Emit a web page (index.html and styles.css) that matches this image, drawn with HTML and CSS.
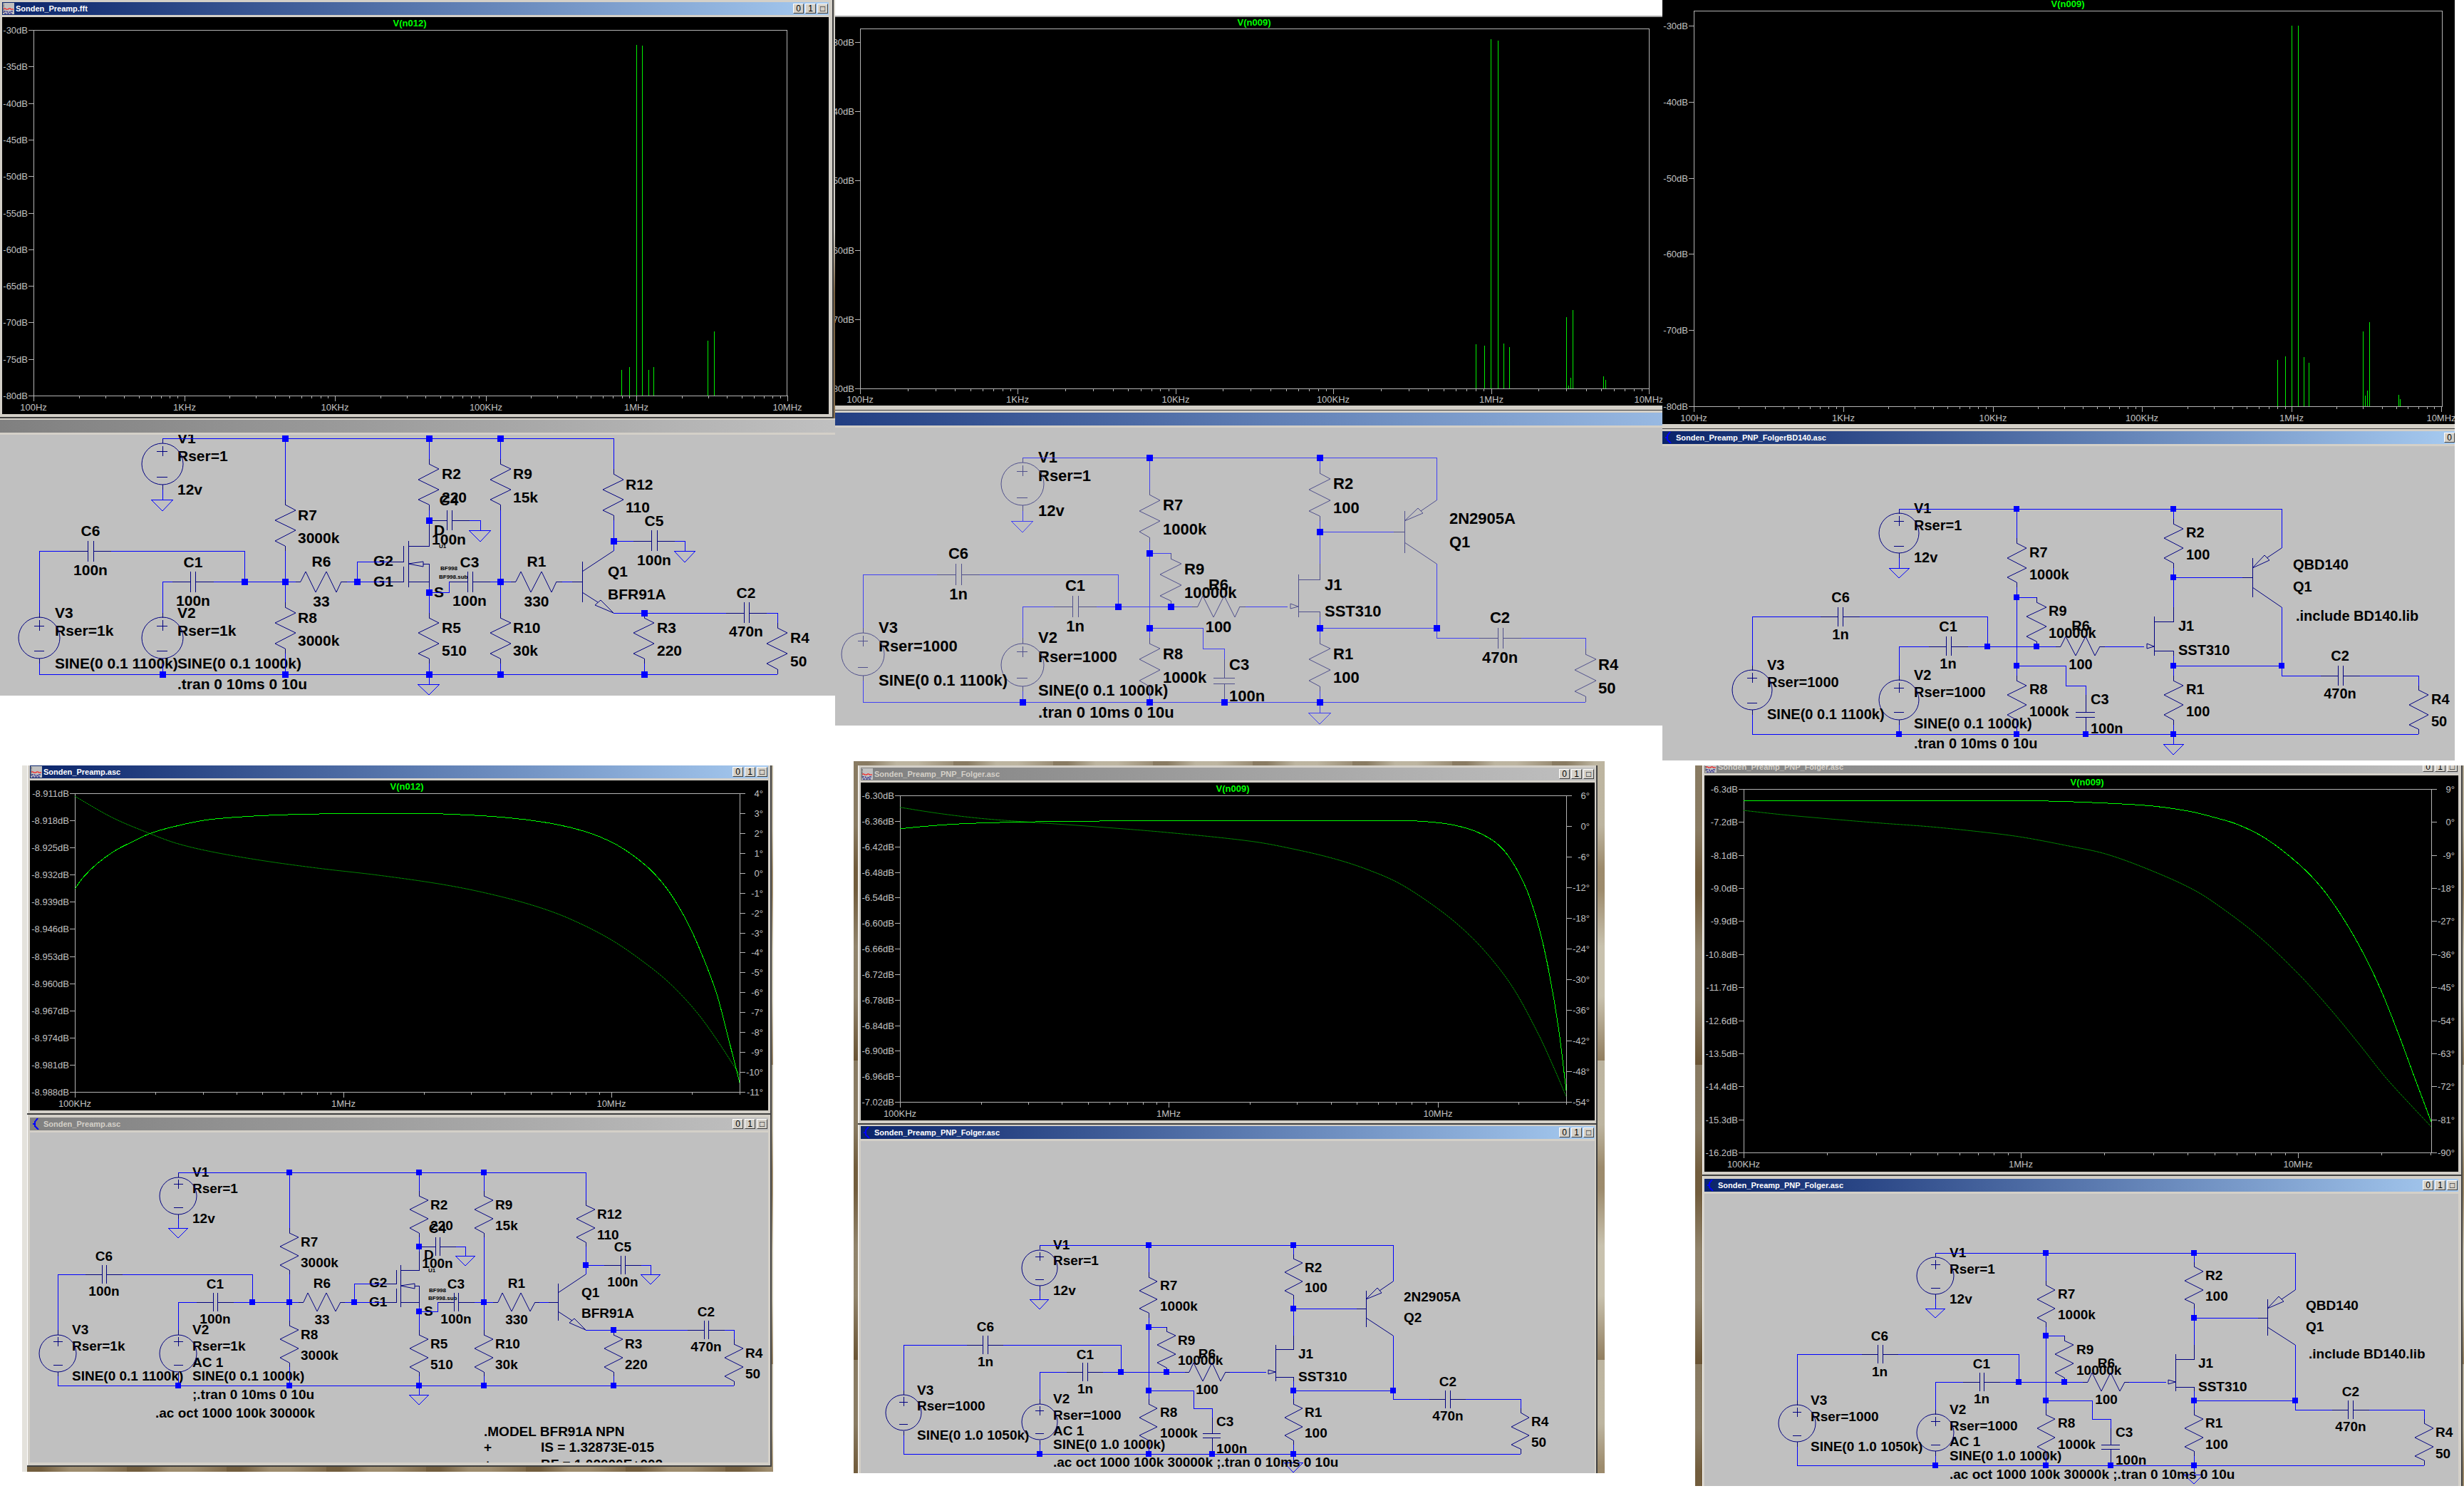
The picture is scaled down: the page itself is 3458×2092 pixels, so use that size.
FILE: index.html
```html
<!DOCTYPE html>
<html lang="de">
<head>
<meta charset="utf-8">
<title>Sonden_Preamp</title>
<link rel="stylesheet" href="styles.css">
</head>
<body>
<svg class="defs" aria-hidden="true">
  <symbol id="icon-plot" viewBox="0 0 16 16">
    <rect width="16" height="16" fill="#c0c0c0"/>
    <path d="M1 1v14" stroke="#000" stroke-dasharray="1 1"/>
    <path d="M1 8h3v1h4v-1h3v1h4" stroke="#f00" fill="none"/>
    <path d="M1 12h5v1h5v-1h4M2 15h12" stroke="#000080" fill="none" stroke-dasharray="3 1"/>
  </symbol>
  <symbol id="icon-schematic" viewBox="0 0 16 16">
    <path d="M3 8h3M6 4v8M6 5l4-5M6 11l5 5M8 14h2" stroke="#00f" stroke-width="2" fill="none"/>
  </symbol>
</svg>
<main class="board">

  <section class="column">
    <div class="strip">
      <article class="window window-framed">
        <header class="bar active">
          <svg class="icon"><use href="#icon-plot"/></svg>
          <h2>Sonden_Preamp.fft</h2>
          <button type="button" aria-label="Minimize">0</button><button type="button" aria-label="Maximize">1</button><button type="button" aria-label="Close">□</button>
        </header>
        <svg class="plot" id="fft-bfr" viewBox="3 24 1160 557"></svg>
      </article>
    </div>
    <article class="window window-flush">
      <div class="bar inactive"></div>
      <svg class="sheet text-21" id="sch-bfr-tran" viewBox="0 610 1172 366"></svg>
    </article>
    <div class="desk desk-left">
      <article class="window window-docked">
        <header class="bar active">
          <svg class="icon"><use href="#icon-plot"/></svg>
          <h2>Sonden_Preamp.asc</h2>
          <button type="button" aria-label="Minimize">0</button><button type="button" aria-label="Maximize">1</button><button type="button" aria-label="Close">□</button>
        </header>
        <svg class="plot" id="ac-bfr" viewBox="42 1095 1036 463"></svg>
      </article>
      <article class="window window-docked lower">
        <header class="bar inactive">
          <svg class="icon"><use href="#icon-schematic"/></svg>
          <h2>Sonden_Preamp.asc</h2>
          <button type="button" aria-label="Minimize">0</button><button type="button" aria-label="Maximize">1</button><button type="button" aria-label="Close">□</button>
        </header>
        <svg class="sheet text-19" id="sch-bfr-ac" viewBox="42 1589 1036 463"></svg>
      </article>
    </div>
  </section>

  <section class="column">
    <article class="window window-bare spaced">
      <svg class="plot" id="fft-2n" viewBox="1172 24 1161 545"></svg>
    </article>
    <article class="window window-flush roomy">
      <div class="bar soft"></div>
      <svg class="sheet text-22 pale" id="sch-2n-tran" viewBox="1172 600 1161 418"></svg>
    </article>
    <div class="desk desk-middle">
      <article class="window window-docked raised">
        <header class="bar inactive">
          <svg class="icon"><use href="#icon-plot"/></svg>
          <h2>Sonden_Preamp_PNP_Folger.asc</h2>
          <button type="button" aria-label="Minimize">0</button><button type="button" aria-label="Maximize">1</button><button type="button" aria-label="Close">□</button>
        </header>
        <svg class="plot" id="ac-2n" viewBox="1208 1098 1030 474"></svg>
      </article>
      <article class="window window-docked cut close">
        <header class="bar active">
          <svg class="icon"><use href="#icon-schematic"/></svg>
          <h2>Sonden_Preamp_PNP_Folger.asc</h2>
          <button type="button" aria-label="Minimize">0</button><button type="button" aria-label="Maximize">1</button><button type="button" aria-label="Close">□</button>
        </header>
        <svg class="sheet text-19" id="sch-2n-ac" viewBox="1208 1601 1030 466"></svg>
      </article>
    </div>
  </section>

  <section class="column">
    <div class="inset">
      <article class="window window-bare">
        <svg class="plot" id="fft-bd" viewBox="2333 0 1112 595"></svg>
      </article>
      <article class="window window-flush roomy">
        <header class="bar active partial">
          <svg class="icon"><use href="#icon-schematic"/></svg>
          <h2>Sonden_Preamp_PNP_FolgerBD140.asc</h2>
          <button type="button" aria-label="Minimize">0</button>
        </header>
        <svg class="sheet text-20" id="sch-bd-tran" viewBox="2333 626 1112 441"></svg>
      </article>
    </div>
    <div class="desk desk-right">
      <article class="window window-docked tucked">
        <header class="bar inactive">
          <svg class="icon"><use href="#icon-plot"/></svg>
          <h2>Sonden_Preamp_PNP_Folger.asc</h2>
          <button type="button" aria-label="Minimize">0</button><button type="button" aria-label="Maximize">1</button><button type="button" aria-label="Close">□</button>
        </header>
        <svg class="plot" id="ac-bd" viewBox="2392 1088 1058 556"></svg>
      </article>
      <article class="window window-docked lower cut">
        <header class="bar active">
          <svg class="icon"><use href="#icon-schematic"/></svg>
          <h2>Sonden_Preamp_PNP_Folger.asc</h2>
          <button type="button" aria-label="Minimize">0</button><button type="button" aria-label="Maximize">1</button><button type="button" aria-label="Close">□</button>
        </header>
        <svg class="sheet text-19" id="sch-bd-ac" viewBox="2392 1675 1058 410"></svg>
      </article>
    </div>
  </section>

</main>
<script src="draw.js"></script>
</body>
</html>
```
FILE: styles.css
```css
* { box-sizing: border-box; }

body {
  margin: 0;
  background: #fff;
  font-family: "Liberation Sans", Arial, sans-serif;
}

.defs { display: none; }

.board {
  display: grid;
  grid-template-columns: 1172fr 1161fr 1125fr;
  align-items: start;
}

.column { display: flex; flex-direction: column; min-width: 0; }

.strip { padding-right: 2px; background: linear-gradient(#d4d0c8 55%, #7a6242 70%, #8a7250); }
.inset { padding-right: 13px; }

/* Wallpaper showing round the docked windows */
.desk {
  background:
    repeating-linear-gradient(90deg, rgba(90, 70, 40, .5) 0 20px, rgba(200, 192, 170, .3) 60px 90px, rgba(110, 90, 60, .4) 140px),
    repeating-linear-gradient(#b8b09c 0 90px, #8a7452 150px 180px, #c8c2b0 260px 330px, #7a6240 420px);
}
.desk-left { margin: 98px 87px 0 31px; padding: 0 2px 7px 0; border-left: 7px solid #e4e2dc; }
.desk-middle { margin: 50px 81px 0 26px; padding: 6px 10px 0 6px; }
.desk-right { margin: 7px 0 0 46px; padding: 0 2px 0 10px; }

.window { background: #d4d0c8; }
.window-framed { padding: 3px 5px 4px 3px; border-right: 2px solid #404040; border-bottom: 2px solid #404040; }
.window-flush { padding-top: 2px; }
.window-flush.roomy { padding-top: 3px; }
.window-bare { padding-bottom: 6px; border-bottom: 1px solid #404040; }
.window-bare.spaced { margin-top: 22px; border-top: 2px solid #a0a0a0; }
.window-docked { padding: 0 2px 4px 3px; border: solid #404040; border-width: 0 2px 2px 0; box-shadow: inset 1px 0 #fff; }
.desk-left .window-docked { padding-left: 4px; padding-right: 3px; }
.desk-middle .window-docked { padding-left: 4px; }
.desk-right .window-docked { padding-right: 4px; }
.window-docked.lower { padding-top: 4px; }
.window-docked.raised { padding-top: 3px; }
.window-docked.close { padding-top: 2px; }
.window-docked.cut { padding-bottom: 0; border-bottom: 0; }
.window-docked.tucked { overflow: hidden; }
.tucked .bar { margin-top: -7px; }

.bar {
  display: flex;
  align-items: center;
  gap: 2px;
  height: 18px;
  margin-bottom: 3px;
  padding: 0 1px;
  color: #fff;
}
.bar.active { background: linear-gradient(90deg, #0a246a, #a6caf0); }
.bar.inactive { background: linear-gradient(90deg, #808080, #c0c0c0); color: #d4d0c8; }
.bar.soft { background: linear-gradient(90deg, #223e82, #98b9e2); }
.bar.partial { padding-right: 0; }
.bar h2 {
  flex: 1;
  margin: 0;
  font-size: 11px;
  line-height: 18px;
  white-space: nowrap;
}
.icon { width: 16px; height: 16px; }

button {
  width: 15px;
  height: 14px;
  padding: 0;
  border: 1px solid;
  border-color: #fff #404040 #404040 #fff;
  background: #d4d0c8;
  color: #000;
  font: 12px/12px "Liberation Sans", Arial, sans-serif;
}

.plot, .sheet { display: block; width: 100%; height: auto; overflow: hidden; }
.plot { background: #000; }
.sheet { background: #c0c0c0; }

.plot text { font-size: 13px; fill: #c0c0c0; }
.plot .trace-name { font-weight: bold; fill: #00ff00; }
.axis { stroke: #b4b4b4; fill: none; shape-rendering: crispEdges; }
.spike { stroke: #00f000; fill: none; shape-rendering: crispEdges; }
.gain { stroke: #00ff00; fill: none; shape-rendering: crispEdges; }
.phase { stroke: #00ff00; fill: none; stroke-dasharray: 1 1; }

.sheet text { font-weight: bold; fill: #000; white-space: pre; }
.text-19 text { font-size: 19px; }
.text-20 text { font-size: 20px; }
.text-21 text { font-size: 21px; }
.text-22 text { font-size: 22px; }
.sheet .tiny { font-size: 8px; }
.wire, .part { fill: none; stroke: #0000ff; shape-rendering: crispEdges; }
.part { stroke: #000080; }
.round, .slant { fill: none; stroke: #000080; }
.earth { fill: none; stroke: #0000ff; }
.dot { fill: #0000ff; }
.pale .wire, .pale .earth { stroke: #4040f4; }
.pale .part, .pale .round, .pale .slant { stroke: #50508c; }
```
FILE: draw.js
```js
const NS = "http://www.w3.org/2000/svg";

function add(svg, name, attrs, text) {
  const node = document.createElementNS(NS, name);
  for (const key in attrs) node.setAttribute(key, attrs[key]);
  if (text !== undefined) node.textContent = text;
  svg.appendChild(node);
}

/* ---------- plots ---------- */

/* Smooth path through a list of points */
function curve(points) {
  let d = "M" + points[0];
  for (let i = 0; i < points.length - 1; i++) {
    const a = points[Math.max(i - 1, 0)], b = points[i], c = points[i + 1];
    const e = points[Math.min(i + 2, points.length - 1)];
    const t = (c[0] - b[0]) / 3;
    const s1 = (c[1] - a[1]) / (c[0] - a[0]), s2 = (e[1] - b[1]) / (e[0] - b[0]);
    d += `C${b[0] + t},${b[1] + t * s1} ${c[0] - t},${c[1] - t * s2} ${c}`;
  }
  return d;
}

function plot(id, o) {
  const svg = document.getElementById(id);
  const [left, top, right, bottom] = o.frame;
  let d = `M${left} ${top}H${right}V${bottom}H${left}Z`;

  o.levels.forEach((label, i) => {
    const step = (bottom - o.first) / (o.levels.length - 1);
    const y = Math.round(o.first + i * step);
    d += `M${left - 7} ${y}h7`;
    add(svg, "text", { x: left - 8, y: y + 5, "text-anchor": "end" }, label);
  });
  (o.degrees || []).forEach((value, i) => {
    const y = Math.round(top + i * (bottom - top) / (o.degrees.length - 1));
    d += `M${right} ${y}h8`;
    add(svg, "text", { x: right + 33, y: y + 5, "text-anchor": "end" }, value + "°");
  });
  o.decades.forEach((label, i) => {
    const x = left + i * o.decade;
    d += `M${Math.round(x)} ${bottom}v8`;
    add(svg, "text", { x: Math.round(x), y: bottom + o.drop, "text-anchor": "middle" }, label);
    for (let n = 2; n < 10; n++) {
      const minor = Math.round(x + o.decade * Math.log10(n));
      if (minor <= right) d += `M${minor} ${bottom}v4`;
    }
  });
  add(svg, "path", { class: "axis", d });
  add(svg, "text", { class: "trace-name", x: o.title[0], y: o.title[1] + 5, "text-anchor": "middle" }, o.name);

  if (o.spikes) {
    add(svg, "path", { class: "spike", d: o.spikes.map(([x, y]) => `M${x} ${y}V${bottom}`).join("") });
  }
  const place = ([x, y]) => [left + x * (right - left) / 1000, top + y * (bottom - top) / 1000];
  if (o.gain) add(svg, "path", { class: "gain", d: curve(o.gain.map(place)) });
  if (o.phase) add(svg, "path", { class: "phase", d: curve(o.phase.map(place)) });
}

const range = (from, to, step, digits, unit) => {
  const out = [];
  const count = Math.round((to - from) / step);
  for (let i = 0; i <= count; i++) out.push((from + i * step).toFixed(digits) + unit);
  return out;
};
const fftDecades = ["100Hz", "1KHz", "10KHz", "100KHz", "1MHz", "10MHz"];
const acDecades = ["100KHz", "1MHz", "10MHz"];

plot("fft-bfr", {
  frame: [47, 42, 1104, 555], first: 42, levels: range(-30, -80, -5, 0, "dB"),
  decades: fftDecades, decade: 211.5, drop: 21, name: "V(n012)", title: [575, 32],
  spikes: [[872, 519], [883, 515], [893, 63], [901, 64], [910, 519], [917, 515], [993, 478], [1002, 465]]
});
plot("fft-2n", {
  frame: [1207, 40, 2314, 545], first: 59, levels: range(-30, -80, -10, 0, "dB"),
  decades: fftDecades, decade: 221.4, drop: 20, name: "V(n009)", title: [1760, 31],
  spikes: [[2071, 483], [2083, 485], [2092, 55], [2102, 57], [2110, 482], [2118, 487], [2198, 445],
    [2201, 541], [2204, 530], [2207, 435], [2250, 528], [2253, 533]]
});
plot("fft-bd", {
  frame: [2377, 15, 3427, 570], first: 36, levels: range(-30, -80, -10, 0, "dB"),
  decades: fftDecades, decade: 209.8, drop: 21, name: "V(n009)", title: [2902, 5],
  spikes: [[3196, 505], [3207, 500], [3216, 36], [3225, 36], [3233, 501], [3240, 509], [3316, 465],
    [3319, 555], [3322, 548], [3325, 452], [3366, 554], [3368, 560]]
});
plot("ac-bfr", {
  frame: [105, 1113, 1038, 1532], first: 1113, levels: range(-8.911, -8.988, -0.007, 3, "dB"),
  degrees: range(4, -11, -1, 0, ""), decades: acDecades, decade: 376.5, drop: 21,
  name: "V(n012)", title: [571, 1103],
  gain: [[0, 320], [14, 278], [34, 235], [60, 193], [86, 163], [113, 135], [145, 114], [193, 91], [243, 80],
    [315, 72], [404, 68], [470, 67], [551, 69], [647, 81], [719, 102], [769, 129], [807, 163], [839, 207],
    [869, 263], [894, 330], [920, 426], [942, 533], [965, 668], [983, 819], [1000, 969]],
  phase: [[0, 10], [56, 81], [113, 135], [152, 167], [204, 195], [281, 225], [366, 251], [455, 274],
    [544, 302], [610, 330], [684, 372], [743, 419], [807, 491], [861, 574], [898, 643], [935, 732],
    [965, 823], [1000, 943]]
});
plot("ac-2n", {
  frame: [1263, 1116, 2198, 1546], first: 1116, levels: range(-6.3, -7.02, -0.06, 2, "dB"),
  degrees: range(6, -54, -6, 0, ""), decades: acDecades, decade: 377.4, drop: 21,
  name: "V(n009)", title: [1730, 1106],
  gain: [[0, 109], [37, 101], [89, 93], [175, 87], [264, 84], [401, 83], [766, 83], [807, 89], [836, 99],
    [866, 119], [896, 157], [918, 213], [941, 309], [959, 430], [974, 574], [989, 766], [1000, 962]],
  phase: [[0, 39], [59, 59], [121, 75], [193, 87], [286, 101], [401, 121], [528, 150], [595, 177],
    [654, 208], [703, 243], [751, 289], [807, 369], [848, 442], [885, 526], [922, 634], [959, 782],
    [981, 886], [1000, 982]]
});
plot("ac-bd", {
  frame: [2447, 1107, 3412, 1617], first: 1107, levels: range(-6.3, -16.2, -0.9, 1, "dB"),
  degrees: range(9, -90, -9, 0, ""), decades: acDecades, decade: 389, drop: 21,
  name: "V(n009)", title: [2929, 1097],
  gain: [[0, 32], [389, 32], [458, 34], [527, 39], [595, 47], [650, 62], [686, 79], [719, 98], [759, 136],
    [807, 206], [842, 275], [875, 365], [904, 462], [930, 567], [955, 687], [977, 800], [1000, 916]],
  phase: [[0, 59], [58, 71], [123, 82], [200, 94], [272, 104], [345, 118], [403, 132], [468, 155],
    [527, 179], [595, 226], [657, 280], [701, 335], [752, 410], [807, 509], [853, 605], [897, 706],
    [933, 792], [969, 867], [1000, 929]]
});

/* ---------- schematics ---------- */

/* Drawing tools for one sheet: x0/y0 is the sheet origin, k the zoom, size the text size */
function sheet(id, x0, y0, k, size, dotSize) {
  const svg = document.getElementById(id);
  const X = x => Math.round(x0 + x * k), Y = y => Math.round(y0 + y * k);
  const line = (cls, ...pts) => {
    let d = "";
    for (let i = 0; i < pts.length; i += 2) d += (i ? "L" : "M") + X(pts[i]) + " " + Y(pts[i + 1]);
    add(svg, "path", { class: cls, d });
  };
  const text = (x, y, label, anchor = "start", cls = "") =>
    add(svg, "text", { x: X(x), y: Y(y) + Math.round((cls ? 8 : size) * 0.32), "text-anchor": anchor, class: cls }, label);
  const wire = (...pts) => line("wire", ...pts);
  const part = (...pts) => line("part", ...pts);
  const slant = (...pts) => line("slant", ...pts);
  return {
    text, wire, part, slant,
    dots(...pts) {
      for (let i = 0; i < pts.length; i += 2) {
        add(svg, "rect", { class: "dot", x: X(pts[i]) - (dotSize >> 1), y: Y(pts[i + 1]) - (dotSize >> 1), width: dotSize, height: dotSize });
      }
    },
    resistor(x, y, name, value) {
      text(x + 20, y + 24, name);
      text(x + 20, y + 60, value);
      part(x, y, x, y + 8);
      slant(x, y + 8, x + 16, y + 16, x - 16, y + 32, x + 16, y + 48, x - 16, y + 64, x, y + 72);
      part(x, y + 72, x, y + 80);
    },
    resistorFlat(x, y, name, value) {
      text(x + 40, y - 32, name, "middle");
      text(x + 40, y + 31, value, "middle");
      part(x, y, x + 8, y);
      slant(x + 8, y, x + 16, y - 16, x + 32, y + 16, x + 48, y - 16, x + 64, y + 16, x + 72, y);
      part(x + 72, y, x + 80, y);
    },
    capacitorFlat(x, y, name, value) {
      text(x, y - 31, name, "middle");
      text(x, y + 30, value, "middle");
      part(x - 32, y, x - 4, y);
      part(x - 4, y - 16, x - 4, y + 16);
      part(x + 4, y - 16, x + 4, y + 16);
      part(x + 4, y, x + 32, y);
    },
    capacitor(x, y, name, value) {
      text(x + 8, y + 8, name);
      text(x + 8, y + 56, value);
      part(x, y, x, y + 28);
      part(x - 16, y + 28, x + 16, y + 28);
      part(x - 16, y + 36, x + 16, y + 36);
      part(x, y + 36, x, y + 64);
    },
    source(x, y, name, ...notes) {
      text(x + 24, y, name);
      notes.forEach(([dy, label]) => text(x + 24, y + dy, label));
      part(x, y, x, y + 8);
      add(svg, "circle", { class: "round", cx: X(x), cy: Y(y + 40), r: Math.round(32 * k) });
      part(x, y + 72, x, y + 80);
      part(x - 8, y + 20, x + 8, y + 20);
      part(x, y + 12, x, y + 28);
      part(x - 8, y + 60, x + 8, y + 60);
    },
    ground(x, y) {
      wire(x - 17, y, x + 17, y);
      line("earth", x - 17, y, x, y + 17, x + 17, y);
    }
  };
}

/* Dual-gate MOSFET stage with NPN output; shift moves the V3/C6 branch, c1 places C1 */
function bfrCircuit(s, shift, c1, v2, v3) {
  s.text(616, 143, "D");
  s.text(616, 240, "S");
  s.text(522, 191, "G2");
  s.text(522, 224, "G1");
  s.text(624, 168, "U1", "start", "tiny");
  s.text(640, 203, "BF998", "middle", "tiny");
  s.text(624, 216, "BF998.sub", "start", "tiny");
  s.text(888, 208, "Q1");
  s.text(888, 244, "BFR91A");
  s.source(192, 0, "V1", [28, "Rser=1"], [80, "12v"]);
  s.source(192, 272, "V2", ...v2);
  s.source(shift, 272, "V3", ...v3);
  s.resistor(608, 32, "R2", "220");
  s.resistor(720, 32, "R9", "15k");
  s.resistor(896, 48, "R12", "110");
  s.resistor(384, 96, "R7", "3000k");
  s.resistor(384, 256, "R8", "3000k");
  s.resistor(608, 272, "R5", "510");
  s.resistor(720, 272, "R10", "30k");
  s.resistor(944, 272, "R3", "220");
  s.resistor(1152, 288, "R4", "50");
  s.resistorFlat(400, 224, "R6", "33");
  s.resistorFlat(736, 224, "R1", "330");
  s.capacitorFlat(80 + shift, 176, "C6", "100n");
  s.capacitorFlat(c1, 224, "C1", "100n");
  s.capacitorFlat(640, 128, "C4", "100n");
  s.capacitorFlat(672, 224, "C3", "100n");
  s.capacitorFlat(960, 160, "C5", "100n");
  s.capacitorFlat(1104, 272, "C2", "470n");
  s.wire(192, 0, 896, 0, 896, 48);
  s.wire(384, 0, 384, 96);
  s.wire(384, 176, 384, 256);
  s.wire(384, 336, 384, 368);
  s.wire(608, 0, 608, 32);
  s.wire(608, 112, 608, 136);
  s.wire(720, 0, 720, 32);
  s.wire(720, 112, 720, 272);
  s.wire(720, 352, 720, 368);
  s.wire(896, 128, 896, 160, 928, 160);
  s.wire(896, 160, 896, 176);
  s.wire(992, 160, 1008, 160, 1008, 176);
  s.wire(672, 128, 688, 128, 688, 144);
  s.wire(shift, 272, shift, 176, 48 + shift, 176);
  s.wire(112 + shift, 176, 320, 176, 320, 224);
  s.wire(192, 272, 192, 224, c1 - 32, 224);
  s.wire(c1 + 32, 224, 400, 224);
  s.wire(480, 224, 544, 224);
  s.wire(496, 224, 496, 192, 544, 192);
  s.wire(608, 240, 640, 240, 640, 224);
  s.wire(704, 224, 736, 224);
  s.wire(816, 224, 832, 224);
  s.wire(608, 232, 608, 272);
  s.wire(608, 352, 608, 384);
  s.wire(896, 272, 1072, 272);
  s.wire(1136, 272, 1152, 272, 1152, 288);
  s.wire(944, 352, 944, 368);
  s.wire(192, 80, 192, 96);
  s.wire(192, 352, 192, 368);
  s.wire(shift, 352, shift, 368, 1152, 368);
  s.ground(192, 96);
  s.ground(608, 384);
  s.ground(688, 144);
  s.ground(1008, 176);
  /* U1 */
  s.part(544, 192, 568, 192, 568, 168);
  s.part(544, 224, 568, 224, 568, 200);
  s.part(576, 160, 576, 232);
  s.part(576, 168, 608, 168, 608, 136);
  s.part(576, 224, 608, 224);
  s.slant(576, 196, 600, 192, 600, 200, 576, 196);
  s.part(600, 196, 608, 196, 608, 232);
  /* Q1 */
  s.part(832, 224, 848, 224);
  s.part(848, 192, 848, 256);
  s.slant(848, 208, 896, 176);
  s.slant(848, 240, 872, 256);
  s.slant(896, 272, 876, 252, 868, 260, 896, 272);
  s.dots(384, 0, 608, 0, 720, 0, 608, 128, 896, 160, 320, 224, 384, 224, 496, 224, 720, 224, 608, 240,
    944, 272, 192, 368, 384, 368, 608, 368, 720, 368, 944, 368);
}

/* JFET stage with PNP follower */
function followerCircuit(s, v2, v3, upper, lower) {
  s.text(696, 192, "J1");
  s.text(696, 232, "SST310");
  s.text(883, 92, upper);
  s.text(883, 128, lower);
  s.source(240, 0, "V1", [28, "Rser=1"], [80, "12v"]);
  s.source(240, 272, "V2", ...v2);
  s.source(0, 256, "V3", ...v3);
  s.resistor(432, 48, "R7", "1000k");
  s.resistor(464, 144, "R9", "10000k");
  s.resistor(432, 272, "R8", "1000k");
  s.resistor(688, 16, "R2", "100");
  s.resistor(688, 272, "R1", "100");
  s.resistor(1088, 288, "R4", "50");
  s.resistorFlat(496, 224, "R6", "100");
  s.capacitorFlat(144, 176, "C6", "1n");
  s.capacitorFlat(320, 224, "C1", "1n");
  s.capacitorFlat(960, 272, "C2", "470n");
  s.capacitor(544, 304, "C3", "100n");
  s.wire(240, 0, 864, 0, 864, 64);
  s.wire(240, 80, 240, 96);
  s.wire(432, 0, 432, 48);
  s.wire(432, 128, 432, 272);
  s.wire(432, 144, 464, 144);
  s.wire(432, 352, 432, 368);
  s.wire(432, 256, 512, 256, 512, 288, 544, 288, 544, 304);
  s.wire(688, 0, 688, 16);
  s.wire(688, 96, 688, 160);
  s.wire(688, 112, 800, 112);
  s.wire(688, 240, 688, 272);
  s.wire(688, 256, 864, 256);
  s.wire(688, 352, 688, 384);
  s.wire(0, 256, 0, 176, 112, 176);
  s.wire(176, 176, 384, 176, 384, 224);
  s.wire(240, 272, 240, 224, 288, 224);
  s.wire(352, 224, 496, 224);
  s.wire(576, 224, 640, 224);
  s.wire(864, 160, 864, 272, 928, 272);
  s.wire(992, 272, 1088, 272, 1088, 288);
  s.wire(240, 352, 240, 368);
  s.wire(0, 336, 0, 368, 1088, 368);
  s.ground(240, 96);
  s.ground(688, 384);
  /* J1 */
  s.part(656, 176, 656, 240);
  s.part(688, 160, 688, 184, 656, 184);
  s.part(656, 232, 688, 232, 688, 240);
  s.slant(644, 220, 656, 224, 644, 228, 644, 220);
  /* PNP */
  s.part(800, 112, 816, 112);
  s.part(816, 80, 816, 144);
  s.slant(864, 64, 840, 80);
  s.slant(816, 96, 836, 76, 844, 84, 816, 96);
  s.slant(816, 128, 864, 160);
  s.dots(432, 0, 688, 0, 688, 112, 432, 144, 384, 224, 464, 224, 432, 256, 688, 256, 864, 256,
    240, 368, 432, 368, 544, 368, 688, 368);
}

let s = sheet("sch-bfr-tran", 55, 615, 0.899, 21, 9);
bfrCircuit(s, 0, 240,
  [[28, "Rser=1k"], [80, "SINE(0 0.1 1000k)"]],
  [[28, "Rser=1k"], [80, "SINE(0 0.1 1100k)"]]);
s.text(216, 384, ".tran 0 10ms 0 10u");

s = sheet("sch-bfr-ac", 94, 1645, 0.8125, 19, 8);
bfrCircuit(s, -16, 256,
  [[28, "Rser=1k"], [56, "AC 1"], [80, "SINE(0 0.1 1000k)"]],
  [[28, "Rser=1k"], [80, "SINE(0 0.1 1100k)"]]);
s.text(216, 384, ";.tran 0 10ms 0 10u");
s.text(152, 416, ".ac oct 1000 100k 30000k");
s.text(720, 448, ".MODEL BFR91A NPN");
s.text(720, 475, "+");
s.text(819, 475, "IS = 1.32873E-015");
s.text(720, 504, "+");
s.text(819, 504, "BF = 1.02000E+002");

const thousand = [28, "Rser=1000"];
s = sheet("sch-2n-tran", 1211, 642, 0.9317, 22, 9);
followerCircuit(s, [thousand, [79, "SINE(0 0.1 1000k)"]], [thousand, [80, "SINE(0 0.1 1100k)"]], "2N2905A", "Q1");
s.text(264, 384, ".tran 0 10ms 0 10u");

s = sheet("sch-bd-tran", 2459, 714, 0.8597, 20, 8);
followerCircuit(s, [thousand, [79, "SINE(0 0.1 1000k)"]], [thousand, [80, "SINE(0 0.1 1100k)"]], "QBD140", "Q1");
s.text(264, 384, ".tran 0 10ms 0 10u");
s.text(887, 176, ".include BD140.lib");

const acSource = [thousand, [56, "AC 1"], [80, "SINE(0 1.0 1000k)"]];
s = sheet("sch-2n-ac", 1268, 1747, 0.7955, 19, 8);
followerCircuit(s, acSource, [thousand, [80, "SINE(0 1.0 1050k)"]], "2N2905A", "Q2");
s.text(264, 383, ".ac oct 1000 100k 30000k ;.tran 0 10ms 0 10u");

s = sheet("sch-bd-ac", 2522, 1758, 0.809, 19, 8);
followerCircuit(s, acSource, [thousand, [80, "SINE(0 1.0 1050k)"]], "QBD140", "Q1");
s.text(264, 384, ".ac oct 1000 100k 30000k ;.tran 0 10ms 0 10u");
s.text(888, 176, ".include BD140.lib");
```
